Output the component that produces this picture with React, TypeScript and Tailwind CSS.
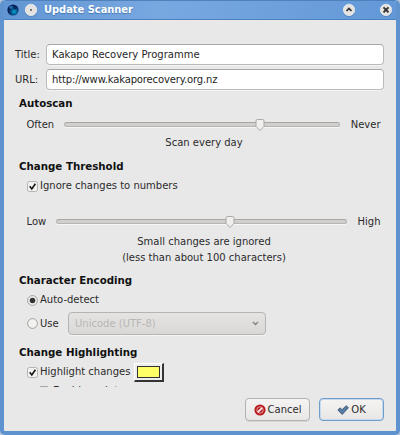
import type { ReactNode } from 'react';

function Field({ label, value, spacing = '' }: { label: string; value: string; spacing?: string }) {
  return (
    <label className="flex h-[21px] items-center">
      <span className="w-[35px] pl-[7px]">{label}</span>
      <input
        readOnly
        value={value}
        className={`ml-[3px] h-[21px] w-[338px] rounded-[4px] border border-[#bcbab8] border-t-[#aaa8a6] bg-white px-[5px] pb-[1px] text-[#1f1f1f] shadow-[0_1px_0_#f4f4f4] outline-none ${spacing}`}
      />
    </label>
  );
}

function Heading({ children }: { children: ReactNode }) {
  return <h2 className="h-4 pl-[15px] text-[10.25px] leading-[14px] font-bold text-[#111]">{children}</h2>;
}

function Slider({ low, high, thumb, track }: { low: string; high: string; thumb: string; track: string }) {
  return (
    <div className="flex h-4 items-center justify-between pr-[15.5px] pl-[22.5px]">
      <span>{low}</span>
      <div className={`relative mb-[2px] ml-auto h-[5px] rounded-full border border-[#b7b5b3] border-t-[#a9a7a5] bg-[#d1cfcd] shadow-[0_1px_0_#f6f6f6] ${track}`}>
        <svg viewBox="0 0 10 14" className={`absolute -top-[5px] h-[14px] w-[10px] ${thumb}`}>
          <path d="M2.5 1.5H7.5Q9 1.5 9 3V8.3L5 12.6L1 8.3V3Q1 1.5 2.5 1.5Z" fill="#f0efee" stroke="#a4a29f" strokeWidth=".9" />
        </svg>
      </div>
      <span>{high}</span>
    </div>
  );
}

function Check() {
  return (
    <svg viewBox="0 0 11 11" className="mr-[2px] h-[11px] w-[11px]">
      <rect x=".5" y=".5" width="10" height="10" rx="2" fill="#f3f2f1" stroke="#b5b3b1" />
      <path d="M2.7 5.3L4.8 7.9L8.4 2.7" fill="none" stroke="#151515" strokeWidth="1.6" />
    </svg>
  );
}

function Radio({ on }: { on?: boolean }) {
  return (
    <svg viewBox="0 0 11 11" className="mr-[2px] h-[11px] w-[11px] shrink-0">
      <circle cx="5.5" cy="5.5" r="4.9" fill="#f3f2f1" stroke="#999795" strokeWidth=".9" />
      {on && <circle cx="5.5" cy="5.5" r="2.8" fill="#333" />}
    </svg>
  );
}

function WindowButton({ children }: { children: ReactNode }) {
  return (
    <svg viewBox="0 0 14 14" className="h-[14px] w-[14px]">
      <circle cx="7" cy="7.5" r="6.2" fill="#406894" opacity=".55" />
      <circle cx="7" cy="6.9" r="5.7" fill="#e4e3e1" stroke="#f7f7f7" strokeWidth=".7" />
      {children}
    </svg>
  );
}

export default function App() {
  return (
    <div className="h-[435px] w-[400px] bg-[#b5c5da] font-['DejaVu_Sans',sans-serif] text-[10px] leading-4 text-[#2b2b2b]">
      <div className="flex h-[435px] w-[400px] flex-col overflow-hidden rounded-[5px] border-x-4 border-b-4 border-[#5e93d0] bg-[#e8e8e8]">
        <header className="-mx-1 flex h-5 shrink-0 items-center border-t border-b border-t-[#4f82bd] border-b-[#4b81be] bg-linear-to-r from-[#6195d3] via-[#78a8e0] via-40% to-[#6298d8] pl-[7px] text-white">
          <svg viewBox="0 0 12 12" className="h-3 w-3">
            <defs>
              <radialGradient id="globe" cx=".6" cy=".65">
                <stop offset="0" stopColor="#00acd4" />
                <stop offset=".45" stopColor="#08609a" />
                <stop offset="1" stopColor="#071e54" />
              </radialGradient>
            </defs>
            <circle cx="6" cy="6" r="5.6" fill="url(#globe)" />
            <path d="M3 2Q5 1 6 3L4 5L2 4Z" fill="#246eac" />
            <path d="M7 3Q9 3 9 5L7 5Z" fill="#08204c" />
          </svg>
          <div className="ml-[5px]">
            <WindowButton><circle cx="7" cy="7" r="1" fill="#555" /></WindowButton>
          </div>
          <h1 className="ml-[6px] text-[9.9px] font-bold [text-shadow:0_1px_1px_#4778b1]">Update Scanner</h1>
          <div className="mr-[7px] ml-auto flex gap-[23px]">
            <WindowButton><path d="M4.5 8L7 5.5L9.5 8" fill="none" stroke="#303030" strokeWidth="1.7" /></WindowButton>
            <WindowButton><path d="M4.5 4.4L9.5 9.4M9.5 4.4L4.5 9.4" stroke="#303030" strokeWidth="1.9" /></WindowButton>
          </div>
        </header>

        <main className="flex flex-col pt-[24px]">
          <div className="flex flex-col gap-[4px] pl-1">
            <Field label="Title:" value="Kakapo Recovery Programme" />
            <Field label="URL:" value="http://www.kakaporecovery.org.nz" spacing="tracking-[-0.15px]" />
          </div>

          <section className="pt-[6px]">
            <Heading>Autoscan</Heading>
            <div className="pt-[5px]">
              <Slider low="Often" high="Never" track="mr-[11px] w-[276px]" thumb="left-[190px]" />
            </div>
            <p className="pt-[2px] pl-[8px] text-center">Scan every day</p>
          </section>

          <section className="pt-[8px]">
            <Heading>Change Threshold</Heading>
            <label className="mt-[3px] flex h-4 items-center pl-[23px]"><Check />Ignore changes to numbers</label>
            <div className="pt-[20px]">
              <Slider low="Low" high="High" track="mr-[11px] w-[291px]" thumb="left-[168px]" />
            </div>
            <p className="pt-[4px] pl-[8px] text-center">Small changes are ignored<br />(less than about 100 characters)</p>
          </section>

          <section className="pt-[7px]">
            <Heading>Character Encoding</Heading>
            <label className="mt-[3px] flex h-4 items-center pl-[23px]"><Radio on />Auto-detect</label>
            <div className="mt-[4px] flex h-[23px] items-center pl-[23px]">
              <Radio />Use
              <div className="mr-[130px] ml-auto flex h-[23px] w-[198px] items-center justify-between rounded-[4px] border border-[#b6b4b2] bg-linear-to-b from-[#e5e4e2] to-[#d9d8d6] pr-[6px] pl-[6px] text-[#b7b6b4] shadow-[0_1px_0_#f5f5f5]">
                Unicode (UTF-8)
                <svg viewBox="0 0 7 5" className="h-[5px] w-[7px]"><path d="M1 1L3.5 3.5L6 1" fill="none" stroke="#858381" strokeWidth="1.4" /></svg>
              </div>
            </div>
          </section>

          <section className="pt-[10px]">
            <Heading>Change Highlighting</Heading>
            <div className="mt-[1px] flex h-5 items-center pl-[23px]">
              <Check />Highlight changes
              <button className="mr-[232px] ml-auto flex h-[19px] w-[30px] items-center justify-center border-t border-r-2 border-b-2 border-l border-t-white border-r-[#333] border-b-[#333] border-l-white bg-[#ededed]">
                <span className="h-[12px] w-[23px] border border-[#333] bg-[#ffff66]" />
              </button>
            </div>
            <div className="mt-[3px] flex h-[2px] items-start overflow-hidden pl-[35px]">
              <span className="mt-[1px] mr-[4px] h-[11px] w-[10px] rounded-[2px] border border-[#a5a3a1]" />
              <span className="-mt-[2px]">Enable scripts</span>
            </div>
          </section>
        </main>

        <footer className="mt-auto mr-[12px] mb-[10px] flex justify-end gap-[9px]">
          <button className="flex h-[23px] w-[65px] items-center justify-center gap-[2px] rounded-[4px] border border-[#b4b2b0] bg-linear-to-b from-[#f5f4f3] to-[#e8e7e6] shadow-[0_1px_0_#d7d6d5]">
            <svg viewBox="0 0 12 12" className="h-3 w-3">
              <circle cx="6" cy="6" r="5.6" fill="#b91d20" />
              <circle cx="6" cy="6" r="3.2" fill="none" stroke="#e9b9b9" strokeWidth=".8" />
              <path d="M3.8 8.2L8.2 3.8" stroke="#f6eeee" strokeWidth="1.8" />
            </svg>
            Cancel
          </button>
          <button className="flex h-[23px] w-[65px] items-center justify-center gap-[2px] rounded-[4px] border border-[#6e9dcc] bg-linear-to-b from-[#f5f4f3] to-[#e8e7e6] shadow-[inset_0_0_0_1px_#c6daee]">
            <svg viewBox="0 0 12 12" className="h-3 w-3">
              <path d="M.8 6L3 3.8L5 5.7L9.2 1.8L11.4 3.7L5.2 10.5Z" fill="#577da5" stroke="#2e4763" strokeWidth=".8" />
            </svg>
            OK
          </button>
        </footer>
      </div>
    </div>
  );
}
